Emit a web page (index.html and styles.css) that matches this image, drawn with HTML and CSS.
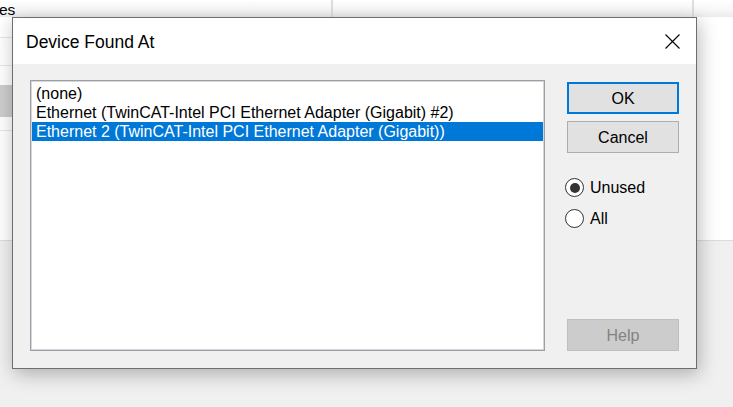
FILE: index.html
```html
<!DOCTYPE html>
<html>
<head>
<meta charset="utf-8">
<link rel="stylesheet" href="styles.css">
</head>
<body>
<div class="desk">
  <div class="pane">
    <div class="hdr">
      <div class="hcell c1"><span class="cut">es</span></div>
      <div class="hcell c2"></div>
      <div class="hcell c3"></div>
    </div>
    <div class="rows">
      <div class="brow r1"></div>
      <div class="brow r2"></div>
      <div class="bgap"></div>
      <div class="brow bsel"></div>
      <div class="brow r3"></div>
    </div>
  </div>
  <div class="lower"></div>

  <div class="dialog">
    <div class="titlebar">
      <span class="title">Device Found At</span>
      <svg class="close" width="15" height="15" viewBox="0 0 15 15">
        <path d="M0.5 0.5 L14.5 14.5 M14.5 0.5 L0.5 14.5" stroke="#000" stroke-width="1.1" fill="none"/>
      </svg>
    </div>
    <div class="body">
      <div class="list">
        <div class="item">(none)</div>
        <div class="item">Ethernet (TwinCAT-Intel PCI Ethernet Adapter (Gigabit) #2)</div>
        <div class="item selected">Ethernet 2 (TwinCAT-Intel PCI Ethernet Adapter (Gigabit))</div>
      </div>
      <div class="side">
        <div class="btn default">OK</div>
        <div class="btn">Cancel</div>
        <div class="radios">
          <div class="radio"><span class="circle checked"></span><span>Unused</span></div>
          <div class="radio"><span class="circle"></span><span>All</span></div>
        </div>
        <div class="btn disabled">Help</div>
      </div>
    </div>
  </div>
</div>
</body>
</html>
```

FILE: styles.css
```css
* { box-sizing: border-box; }
html, body { margin: 0; padding: 0; }
body {
  width: 733px;
  height: 407px;
  overflow: hidden;
  background: #f0f0f0;
  font-family: "Liberation Sans", Arial, sans-serif;
  color: #000;
}
.desk {
  position: relative;
  width: 733px;
  height: 407px;
  display: flex;
  flex-direction: column;
}
.pane {
  height: 241px;
  background: #fff;
  border-bottom: 1px solid #dcdcdc;
  display: flex;
  flex-direction: column;
}
.hdr {
  height: 17px;
  display: flex;
  background: linear-gradient(#ffffff, #f7f7f7 60%, #ececec);
}
.hcell {
  height: 17px;
  border-right: 2px solid #dedede;
}
.c1 { width: 333px; overflow: hidden; }
.c2 { width: 361px; }
.c3 { flex: 1; border-right: none; }
.cut {
  display: block;
  font-size: 15.5px;
  line-height: 17px;
  padding-top: 1px;
  margin-left: -1px;
  white-space: nowrap;
}
.rows {
  width: 333px;
  display: flex;
  flex-direction: column;
}
.brow { border-bottom: 1px solid #e6e6e6; }
.r1 { height: 21px; }
.r2 { height: 28px; }
.bgap { height: 19px; }
.bsel { height: 32px; background: #cdcdcd; border-bottom: none; }
.r3 { height: 14px; }
.lower { flex: 1; }

.dialog {
  position: absolute;
  left: 12px;
  top: 17px;
  width: 685px;
  height: 352px;
  border: 1px solid #6e6e6e;
  background: #f0f0f0;
  box-shadow: 2px 5px 18px rgba(0, 0, 0, 0.28);
  display: flex;
  flex-direction: column;
}
.titlebar {
  height: 46px;
  background: #fff;
  display: flex;
  align-items: center;
  justify-content: space-between;
  padding: 0 16px 0 13px;
}
.title {
  font-size: 17.5px;
  line-height: 20px;
  margin-top: 2px;
}
.close { display: block; margin-top: 0px; }

.body {
  flex: 1;
  display: flex;
  gap: 22px;
  padding: 16px 16px 17px 17px;
}
.list {
  width: 515px;
  background: #fff;
  border: 1px solid #9aa0a6;
  box-shadow: inset 0 0 0 1px #d4d6d9;
  padding: 3px 1px;
  font-size: 16px;
}
.item {
  height: 19px;
  line-height: 20px;
  padding-left: 4px;
  white-space: nowrap;
}
.item.selected {
  background: #0078d7;
  color: #fff;
}

.side {
  width: 112px;
  display: flex;
  flex-direction: column;
  padding-top: 2px;
}
.btn {
  height: 32px;
  background: #e1e1e1;
  border: 1px solid #adadad;
  font-size: 16px;
  display: flex;
  align-items: center;
  justify-content: center;
  padding-top: 1px;
}
.btn + .btn { margin-top: 7px; }
.btn.default { border: 2px solid #0078d7; }
.btn.disabled {
  margin-top: auto;
  background: #cccccc;
  border-color: #bfbfbf;
  color: #838383;
}
.radios {
  display: flex;
  flex-direction: column;
  gap: 12px;
  margin-top: 25px;
}
.radio {
  height: 19px;
  display: flex;
  align-items: center;
  gap: 6px;
  font-size: 16px;
  margin-left: -2px;
}
.circle {
  width: 19px;
  height: 19px;
  border-radius: 50%;
  border: 1.5px solid #333;
  background: #fff;
  display: flex;
  align-items: center;
  justify-content: center;
}
.circle.checked::after {
  content: "";
  width: 10px;
  height: 10px;
  border-radius: 50%;
  background: #333;
}
```
